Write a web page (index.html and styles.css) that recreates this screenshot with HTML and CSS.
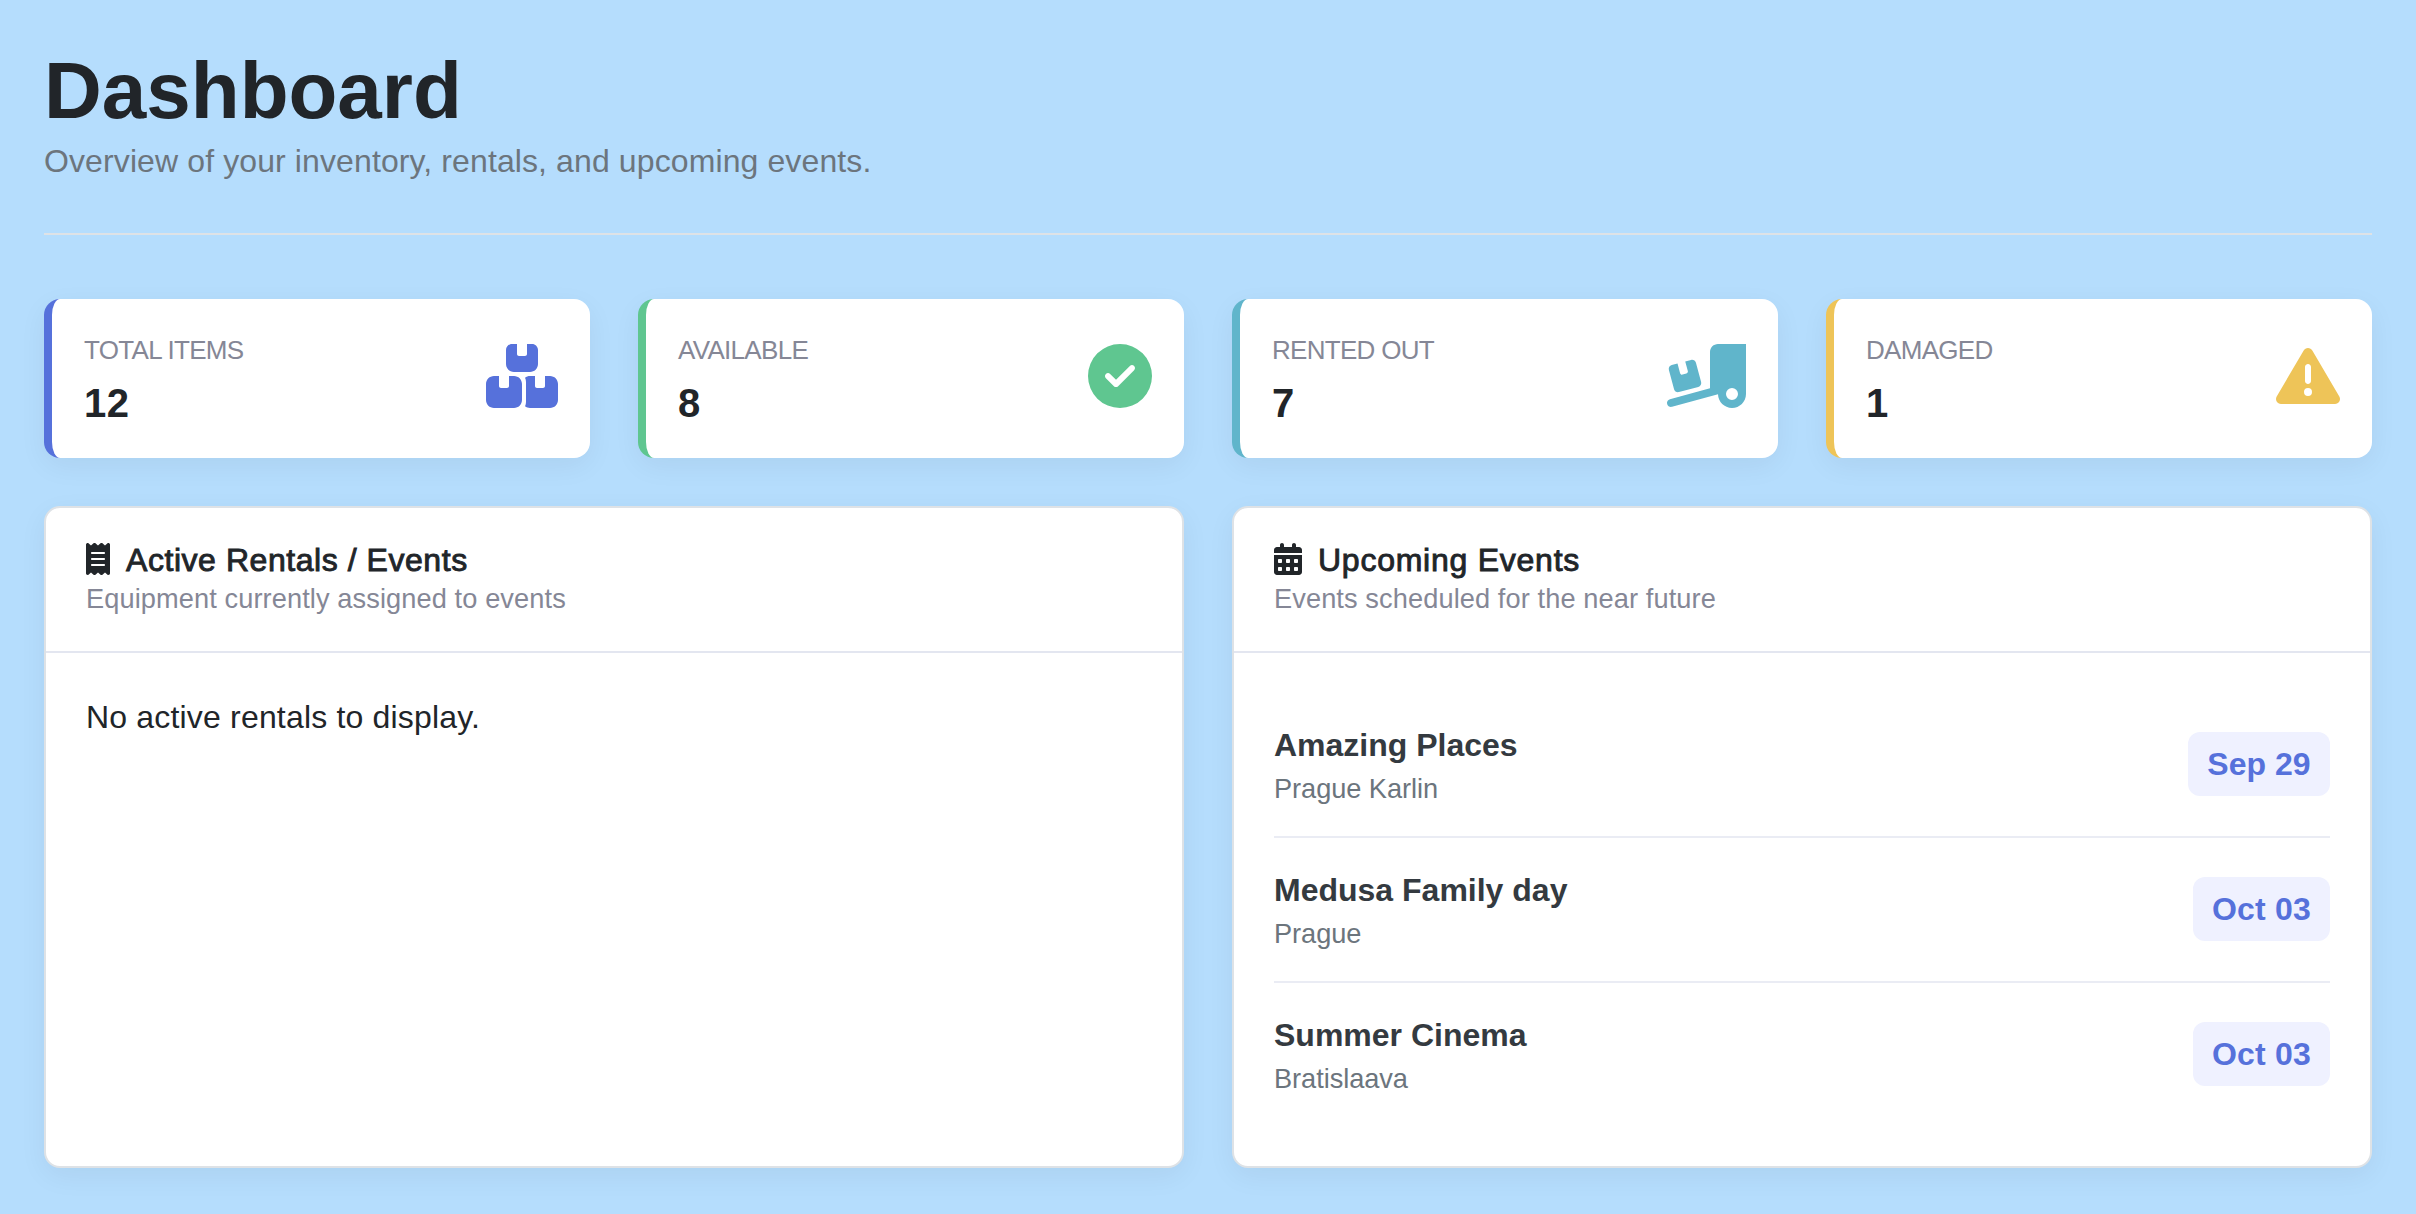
FILE: index.html
```html
<!DOCTYPE html>
<html lang="en">
<head>
<meta charset="utf-8">
<title>Dashboard</title>
<link rel="stylesheet" href="styles.css">
</head>
<body>
<header class="page-header">
  <h1 class="page-title">Dashboard</h1>
  <p class="page-lead">Overview of your inventory, rentals, and upcoming events.</p>
</header>
<main>
  <section class="stats">
    <article class="stat stat-primary">
      <div>
        <div class="stat-label">TOTAL ITEMS</div>
        <div class="stat-value">12</div>
      </div>
      <svg class="stat-icon" width="72" height="64" viewBox="0 0 576 512"><path d="M248 0H208c-26.5 0-48 21.5-48 48V160c0 35.3 28.7 64 64 64H352c35.3 0 64-28.7 64-64V48c0-26.5-21.5-48-48-48H328V80c0 8.800-7.200 16-16 16H264c-8.800 0-16-7.200-16-16V0zM64 256c-35.300 0-64 28.700-64 64V448c0 35.300 28.700 64 64 64H224c35.300 0 64-28.700 64-64V320c0-35.300-28.700-64-64-64H184v80c0 8.800-7.200 16-16 16H120c-8.800 0-16-7.200-16-16V256H64zM352 512H512c35.300 0 64-28.700 64-64V320c0-35.300-28.700-64-64-64H472v80c0 8.800-7.200 16-16 16H408c-8.800 0-16-7.200-16-16V256H352c-15 0-28.800 5.100-39.700 13.800c4.900 10.400 7.700 22 7.700 34.200V464c0 12.200-2.800 23.800-7.700 34.200C323.200 506.900 337 512 352 512z"/></svg>
    </article>
    <article class="stat stat-success">
      <div>
        <div class="stat-label">AVAILABLE</div>
        <div class="stat-value">8</div>
      </div>
      <svg class="stat-icon" width="64" height="64" viewBox="0 0 512 512"><path d="M256 512A256 256 0 1 0 256 0a256 256 0 1 0 0 512zM369 209L241 337c-9.400 9.400-24.600 9.400-33.900 0l-64-64c-9.400-9.400-9.400-24.600 0-33.900s24.600-9.400 33.900 0l47 47L335 175c9.400-9.400 24.600-9.400 33.900 0s9.400 24.600 0 33.900z"/></svg>
    </article>
    <article class="stat stat-info">
      <div>
        <div class="stat-label">RENTED OUT</div>
        <div class="stat-value">7</div>
      </div>
      <svg class="stat-icon" width="80" height="64" viewBox="0 0 640 512"><path d="M640 0V400c0 61.900-50.100 112-112 112c-61 0-110.500-48.700-112-109.300L48.400 502.900c-17.100 4.600-34.600-5.400-39.300-22.500s5.400-34.600 22.500-39.300L352 353.800V64c0-35.300 28.700-64 64-64H640zM576 400a48 48 0 1 0 -96 0 48 48 0 1 0 96 0zM23.100 207.700c-4.600-17.100 5.600-34.600 22.600-39.200l46.400-12.400 20.700 77.300c2.300 8.500 11.100 13.600 19.600 11.300l30.900-8.300c8.500-2.300 13.600-11.100 11.300-19.600l-20.700-77.300 46.400-12.400c17.100-4.600 34.600 5.600 39.200 22.600l41.400 154.500c4.600 17.100-5.600 34.600-22.600 39.200L103.700 384.900c-17.100 4.600-34.600-5.600-39.200-22.600L23.100 207.700z"/></svg>
    </article>
    <article class="stat stat-warning">
      <div>
        <div class="stat-label">DAMAGED</div>
        <div class="stat-value">1</div>
      </div>
      <svg class="stat-icon" width="64" height="64" viewBox="0 0 512 512"><path d="M256 32c14.200 0 27.300 7.500 34.500 19.800l216 368c7.300 12.400 7.300 27.700 .2 40.100S486.300 480 472 480H40c-14.300 0-27.600-7.700-34.700-20.100s-7-27.800 .2-40.100l216-368C228.700 39.500 241.800 32 256 32zm0 128c-13.300 0-24 10.700-24 24V296c0 13.300 10.700 24 24 24s24-10.700 24-24V184c0-13.300-10.700-24-24-24zm32 224a32 32 0 1 0 -64 0 32 32 0 1 0 64 0z"/></svg>
    </article>
  </section>

  <section class="panels">
    <article class="panel">
      <header class="panel-header">
        <h2 class="panel-title">
          <svg width="24" height="32" viewBox="0 0 384 512"><path d="M14 2.200C22.500-1.700 32.500-.3 39.600 5.800L80 40.400 120.400 5.800c9-7.700 22.300-7.700 31.200 0L192 40.400 232.400 5.800c9-7.700 22.300-7.700 31.200 0L304 40.400 344.400 5.800c7.100-6.100 17.100-7.500 25.600-3.600s14 12.400 14 21.800V488c0 9.400-5.500 17.900-14 21.800s-18.500 2.500-25.600-3.600L304 471.600l-40.400 34.600c-9 7.700-22.300 7.700-31.200 0L192 471.600l-40.400 34.600c-9 7.700-22.300 7.700-31.200 0L80 471.600 39.600 506.200c-7.100 6.100-17.100 7.500-25.600 3.600S0 497.400 0 488V24C0 14.600 5.500 6.100 14 2.200zM96 144c-8.800 0-16 7.200-16 16s7.200 16 16 16H288c8.800 0 16-7.200 16-16s-7.200-16-16-16H96zM80 352c0 8.800 7.200 16 16 16H288c8.800 0 16-7.200 16-16s-7.200-16-16-16H96c-8.800 0-16 7.200-16 16zM96 240c-8.800 0-16 7.200-16 16s7.200 16 16 16H288c8.800 0 16-7.200 16-16s-7.200-16-16-16H96z"/></svg>
          <span>Active Rentals / Events</span>
        </h2>
        <p class="panel-subtitle">Equipment currently assigned to events</p>
      </header>
      <div class="panel-body">
        <p class="empty">No active rentals to display.</p>
      </div>
    </article>

    <article class="panel">
      <header class="panel-header">
        <h2 class="panel-title">
          <svg width="28" height="32" viewBox="0 0 448 512"><path d="M128 0c17.700 0 32 14.300 32 32V64H288V32c0-17.700 14.300-32 32-32s32 14.300 32 32V64h48c26.500 0 48 21.500 48 48v48H0V112C0 85.500 21.500 64 48 64H96V32c0-17.700 14.300-32 32-32zM0 192H448V464c0 26.500-21.500 48-48 48H48c-26.500 0-48-21.500-48-48V192zm64 80v32c0 8.800 7.200 16 16 16h32c8.800 0 16-7.200 16-16V272c0-8.800-7.200-16-16-16H80c-8.800 0-16 7.200-16 16zm128 0v32c0 8.800 7.200 16 16 16h32c8.800 0 16-7.200 16-16V272c0-8.800-7.200-16-16-16H208c-8.800 0-16 7.200-16 16zm144-16c-8.800 0-16 7.200-16 16v32c0 8.800 7.200 16 16 16h32c8.800 0 16-7.200 16-16V272c0-8.800-7.200-16-16-16H336zM64 400v32c0 8.800 7.200 16 16 16h32c8.800 0 16-7.200 16-16V400c0-8.800-7.200-16-16-16H80c-8.800 0-16 7.200-16 16zm144-16c-8.800 0-16 7.200-16 16v32c0 8.800 7.200 16 16 16h32c8.800 0 16-7.200 16-16V400c0-8.800-7.200-16-16-16H208zm112 16v32c0 8.800 7.200 16 16 16h32c8.800 0 16-7.200 16-16V400c0-8.800-7.200-16-16-16H336c-8.800 0-16 7.200-16 16z"/></svg>
          <span class="wide">Upcoming Events</span>
        </h2>
        <p class="panel-subtitle">Events scheduled for the near future</p>
      </header>
      <div class="panel-body">
        <ul class="events">
          <li class="event">
            <div>
              <div class="event-name">Amazing Places</div>
              <div class="event-place">Prague Karlin</div>
            </div>
            <span class="event-date">Sep 29</span>
          </li>
          <li class="event">
            <div>
              <div class="event-name">Medusa Family day</div>
              <div class="event-place">Prague</div>
            </div>
            <span class="event-date event-date-oct">Oct 03</span>
          </li>
          <li class="event">
            <div>
              <div class="event-name">Summer Cinema</div>
              <div class="event-place">Bratislaava</div>
            </div>
            <span class="event-date event-date-oct">Oct 03</span>
          </li>
        </ul>
      </div>
    </article>
  </section>
</main>
</body>
</html>
```

FILE: styles.css
```css
* {
  box-sizing: border-box;
  margin: 0;
  padding: 0;
}

body {
  min-height: 1214px;
  padding: 44px 44px 0;
  background: #b5ddfd;
  color: #212529;
  font: 32px/48px "Liberation Sans", Arial, sans-serif;
}

svg {
  display: block;
  flex: none;
  fill: currentColor;
}

.page-header {
  margin-bottom: 64px;
  padding-bottom: 49px;
  border-bottom: 2px solid #dee2e6;
}

.page-title {
  font-size: 80px;
  line-height: 94px;
}

.page-lead {
  line-height: 46px;
  letter-spacing: 0.11px;
  color: #6c757d;
}

.stats {
  display: grid;
  grid-template-columns: repeat(4, 1fr);
  gap: 48px;
  margin-bottom: 48px;
}

.stat {
  display: flex;
  align-items: center;
  justify-content: space-between;
  height: 159px;
  padding: 0 32px;
  background: #fff;
  border-left: 8px solid;
  border-radius: 16px;
  box-shadow: 0 8px 28px rgba(0, 0, 0, 0.055);
}

.stat-primary { color: #5671db; }
.stat-success { color: #5fc690; }
.stat-info { color: #60b5cb; }
.stat-warning { color: #eec458; }

.stat-label {
  margin-bottom: 10px;
  font-size: 26px;
  line-height: 38px;
  letter-spacing: -0.7px;
  color: #858796;
}

.stat-value {
  font-size: 40px;
  font-weight: bold;
  line-height: 48px;
  letter-spacing: 0.5px;
  color: #212529;
}

.stat-icon {
  margin-bottom: 5px;
}

.panels {
  display: grid;
  grid-template-columns: repeat(2, 1fr);
  gap: 48px;
}

.panel {
  background: #fff;
  border: 2px solid #dee2e6;
  border-radius: 16px;
  box-shadow: 0 8px 28px rgba(0, 0, 0, 0.055);
}

.panel-header {
  padding: 32px 40px 34px;
  border-bottom: 2px solid #e3e6f0;
}

.panel-title {
  display: flex;
  align-items: center;
  gap: 16px;
  font-size: 32px;
  font-weight: normal;
  line-height: 40px;
  letter-spacing: 0.55px;
  -webkit-text-stroke: 0.9px currentColor;
}

.panel-title svg {
  margin-bottom: 2px;
}

.panel-title .wide {
  letter-spacing: 0.75px;
}

.panel-subtitle {
  font-size: 27.2px;
  line-height: 37px;
  letter-spacing: 0.1px;
  color: #858796;
}

.panel-body {
  padding: 40px;
}

.empty {
  letter-spacing: 0.18px;
}

.events {
  list-style: none;
}

.event {
  display: flex;
  align-items: center;
  justify-content: space-between;
  height: 145px;
  border-bottom: 2px solid #eaecf4;
}

.event:last-child {
  height: 143px;
  border-bottom: 0;
}

.event-name {
  font-weight: bold;
  line-height: 42px;
  color: #343a40;
}

.event-place {
  margin-top: 3px;
  margin-bottom: -2px;
  font-size: 27.2px;
  line-height: 39px;
  letter-spacing: -0.05px;
  color: #6c757d;
}

.event-date {
  margin-bottom: 1px;
  padding: 0 19.5px;
  border-radius: 12px;
  background: #eff1ff;
  color: #5671db;
  font-weight: bold;
  line-height: 64px;
}

.event-date-oct {
  padding: 0 19px;
  letter-spacing: 0.2px;
}
```
